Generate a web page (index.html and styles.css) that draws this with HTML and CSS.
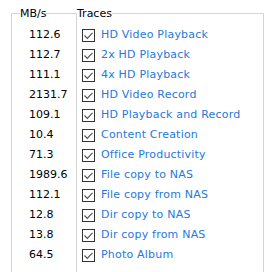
FILE: index.html
```
<!DOCTYPE html>
<html lang="en">
<head>
    <meta charset="UTF-8">
    <meta name="viewport" content="width=device-width, initial-scale=1.0">
    <title>Traces</title>
    <link rel="stylesheet" href="styles.css">
</head>
<body>
    <div class="panel">
        <fieldset class="group speeds">
            <legend>MB/s</legend>
            <ul class="rows">
                <li>112.6</li>
                <li>112.7</li>
                <li>111.1</li>
                <li>2131.7</li>
                <li>109.1</li>
                <li>10.4</li>
                <li>71.3</li>
                <li>1989.6</li>
                <li>112.1</li>
                <li>12.8</li>
                <li>13.8</li>
                <li>64.5</li>
            </ul>
        </fieldset>

        <fieldset class="group traces">
            <legend>Traces</legend>
            <ul class="rows">
                <li><svg class="check" viewBox="0 0 13 13"><rect x="0.5" y="0.5" width="12" height="12"/><polyline points="2.5,6.5 5.3,9.3 10.5,3.8"/></svg>HD Video Playback</li>
                <li><svg class="check" viewBox="0 0 13 13"><rect x="0.5" y="0.5" width="12" height="12"/><polyline points="2.5,6.5 5.3,9.3 10.5,3.8"/></svg>2x HD Playback</li>
                <li><svg class="check" viewBox="0 0 13 13"><rect x="0.5" y="0.5" width="12" height="12"/><polyline points="2.5,6.5 5.3,9.3 10.5,3.8"/></svg>4x HD Playback</li>
                <li><svg class="check" viewBox="0 0 13 13"><rect x="0.5" y="0.5" width="12" height="12"/><polyline points="2.5,6.5 5.3,9.3 10.5,3.8"/></svg>HD Video Record</li>
                <li><svg class="check" viewBox="0 0 13 13"><rect x="0.5" y="0.5" width="12" height="12"/><polyline points="2.5,6.5 5.3,9.3 10.5,3.8"/></svg>HD Playback and Record</li>
                <li><svg class="check" viewBox="0 0 13 13"><rect x="0.5" y="0.5" width="12" height="12"/><polyline points="2.5,6.5 5.3,9.3 10.5,3.8"/></svg>Content Creation</li>
                <li><svg class="check" viewBox="0 0 13 13"><rect x="0.5" y="0.5" width="12" height="12"/><polyline points="2.5,6.5 5.3,9.3 10.5,3.8"/></svg>Office Productivity</li>
                <li><svg class="check" viewBox="0 0 13 13"><rect x="0.5" y="0.5" width="12" height="12"/><polyline points="2.5,6.5 5.3,9.3 10.5,3.8"/></svg>File copy to NAS</li>
                <li><svg class="check" viewBox="0 0 13 13"><rect x="0.5" y="0.5" width="12" height="12"/><polyline points="2.5,6.5 5.3,9.3 10.5,3.8"/></svg>File copy from NAS</li>
                <li><svg class="check" viewBox="0 0 13 13"><rect x="0.5" y="0.5" width="12" height="12"/><polyline points="2.5,6.5 5.3,9.3 10.5,3.8"/></svg>Dir copy to NAS</li>
                <li><svg class="check" viewBox="0 0 13 13"><rect x="0.5" y="0.5" width="12" height="12"/><polyline points="2.5,6.5 5.3,9.3 10.5,3.8"/></svg>Dir copy from NAS</li>
                <li><svg class="check" viewBox="0 0 13 13"><rect x="0.5" y="0.5" width="12" height="12"/><polyline points="2.5,6.5 5.3,9.3 10.5,3.8"/></svg>Photo Album</li>
            </ul>
        </fieldset>
    </div>
</body>
</html>
```

FILE: styles.css
```
/* General Styling */
body {
    margin: 0;
    background: #fff;
    font-family: "DejaVu Sans", Verdana, sans-serif;
    font-size: 11px;
    color: #000;
}

.panel {
    display: flex;
    height: 272px;
    padding: 6px 0 0 11px;
    box-sizing: border-box;
}

.group {
    margin: 0;
    padding: 0;
    height: 100%;
    border: 1px solid #d5d5d5;
    border-bottom: none;
    box-sizing: border-box;
}

.group legend {
    padding: 0;
    line-height: 15px;
}

.speeds {
    width: 66px;
}

.speeds legend {
    margin-left: 8px;
}

.traces {
    width: 187px;
    border-left: none;
}

.rows {
    list-style: none;
    margin: 0;
    padding: 4px 0 0 0;
}

.rows li {
    height: 20px;
    line-height: 20px;
    white-space: nowrap;
}

.speeds .rows li {
    padding-left: 17px;
}

.traces .rows li {
    display: flex;
    align-items: center;
    padding-left: 5px;
    color: #2579d9;
    letter-spacing: 0.2px;
}

.check {
    width: 13px;
    height: 13px;
    margin-right: 6px;
    flex-shrink: 0;
}

.check rect {
    fill: #fff;
    stroke: #333;
    stroke-width: 1;
}

.check polyline {
    fill: none;
    stroke: #555;
    stroke-width: 1.2;
}
```
